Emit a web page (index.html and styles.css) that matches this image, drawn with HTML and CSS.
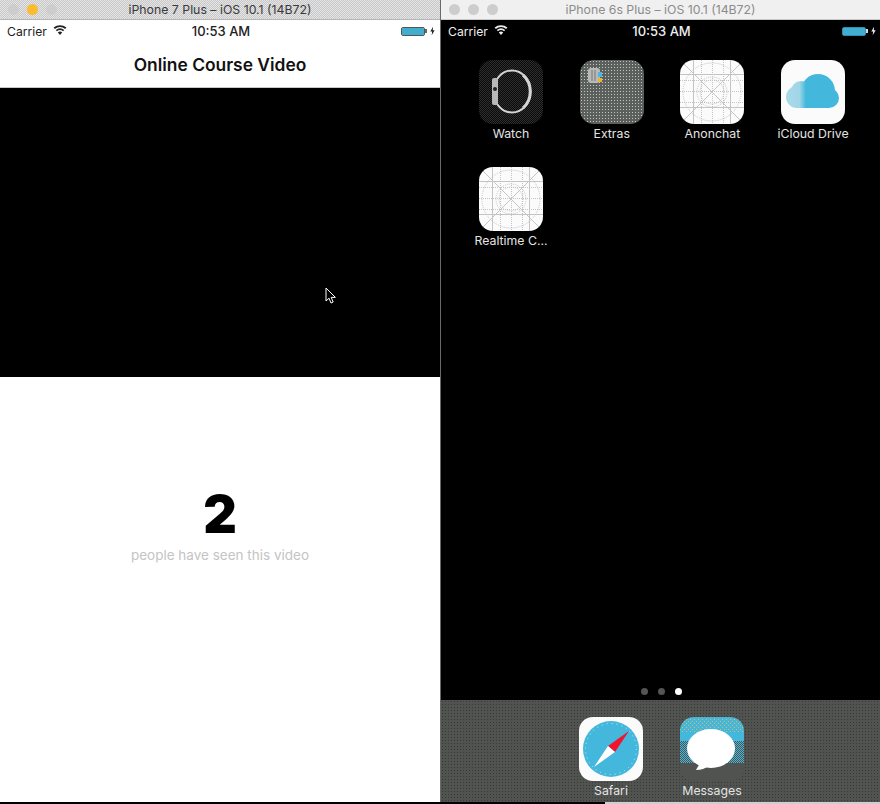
FILE: index.html
```html
<!DOCTYPE html>
<html lang="en">
<head>
<meta charset="utf-8">
<title>Simulators</title>
<link rel="stylesheet" href="styles.css">
</head>
<body>
<svg class="defs" width="0" height="0" aria-hidden="true">
  <defs>
    <linearGradient id="cloud-fill" gradientUnits="userSpaceOnUse" x1="6" y1="0" x2="58" y2="0">
      <stop offset="0" stop-color="#a9d9e8"/>
      <stop offset=".24" stop-color="#a0d6e7"/>
      <stop offset=".36" stop-color="#44b8dc"/>
    </linearGradient>
    <pattern id="dither-blue" width="2" height="2" patternUnits="userSpaceOnUse">
      <rect width="1" height="1" fill="#44b8dc"/>
      <rect x="1" y="1" width="1" height="1" fill="#44b8dc"/>
    </pattern>
    <pattern id="dither-orange" width="4" height="4" patternUnits="userSpaceOnUse">
      <rect width="1" height="1" fill="#e2b75a"/>
      <rect x="2" y="2" width="1" height="1" fill="#e2b75a"/>
    </pattern>
  </defs>
  <symbol id="template" viewBox="0 0 64 64">
    <g fill="none" stroke="#c4c4c4" stroke-width="1">
      <path d="M0 0L64 64M64 0L0 64M13.5 0V64M50.5 0V64M0 14.5H64M0 47.5H64"/>
      <g stroke-dasharray="1 1">
        <path d="M32.5 0V64M0 31.5H64M21.5 0V64M43.5 0V64M0 20.5H64M0 42.5H64"/>
        <circle cx="32" cy="32" r="29"/>
        <circle cx="32" cy="32" r="15"/>
        <circle cx="32" cy="32" r="12"/>
      </g>
    </g>
  </symbol>
  <symbol id="wifi" viewBox="0 0 14 10">
    <path fill="currentColor" d="M7 10L4.8 7.4A3.4 3.4 0 0 1 9.2 7.4ZM3.9 6.3L2.8 5A6.6 6.6 0 0 1 11.2 5L10.1 6.3A4.9 4.9 0 0 0 3.9 6.3ZM1.9 3.9L.6 2.5A10 10 0 0 1 13.4 2.5L12.1 3.9A8.1 8.1 0 0 0 1.9 3.9Z"/>
  </symbol>
  <symbol id="bolt" viewBox="0 0 6 10">
    <path fill="currentColor" d="M3.6 0L.4 5.6H2.6L2 10L5.6 4.2H3.3Z"/>
  </symbol>
</svg>

<div class="desktop">
  <div class="windows">
    <section class="window window-left">
      <header class="titlebar">
        <div class="lights"><span class="light light-off"></span><span class="light light-on"></span><span class="light light-off"></span></div>
        <span class="title">iPhone 7 Plus – iOS 10.1 (14B72)</span>
      </header>
      <div class="statusbar">
        <div class="status-left"><span>Carrier</span><svg class="wifi"><use href="#wifi"/></svg></div>
        <span class="clock">10:53 AM</span>
        <div class="status-right"><span class="battery"><span class="battery-fill"></span></span><span class="battery-tip"></span><svg class="bolt"><use href="#bolt"/></svg></div>
      </div>
      <nav class="navbar">Online Course Video</nav>
      <div class="video"></div>
      <div class="stats">
        <div class="count">2</div>
        <div class="caption">people have seen this video</div>
      </div>
      <svg class="cursor" width="12" height="18" viewBox="0 0 12 18"><path d="M1 1V14L4 11.2L6 16L8.2 15L6.2 10.4H10.4Z" fill="#000" stroke="#fff" stroke-width="1"/></svg>
    </section>

    <section class="window window-right">
      <header class="titlebar titlebar-inactive">
        <div class="lights"><span class="light light-off"></span><span class="light light-off"></span><span class="light light-off"></span></div>
        <span class="title">iPhone 6s Plus – iOS 10.1 (14B72)</span>
      </header>
      <div class="statusbar statusbar-dark">
        <div class="status-left"><span>Carrier</span><svg class="wifi"><use href="#wifi"/></svg></div>
        <span class="clock">10:53 AM</span>
        <div class="status-right"><span class="battery"><span class="battery-fill"></span></span><span class="battery-tip"></span><svg class="bolt"><use href="#bolt"/></svg></div>
      </div>
      <div class="home">
        <div class="app">
          <div class="icon icon-watch">
            <svg width="64" height="64" viewBox="0 0 64 64"><ellipse cx="33" cy="31.5" rx="18.5" ry="21" fill="none" stroke="#d4d4d4" stroke-width="2"/><path d="M44 15A19 21 0 0 1 44 48" fill="none" stroke="#d4d4d4" stroke-width="3"/><rect x="13" y="18" width="6" height="27" rx="2" fill="#b8b8b8"/><circle cx="16" cy="29" r="2" fill="#222"/></svg>
          </div>
          <span class="app-label">Watch</span>
        </div>
        <div class="app">
          <div class="icon icon-extras">
            <svg width="64" height="64" viewBox="0 0 64 64"><rect x="8" y="8" width="12" height="15" rx="3" fill="#b9b9b9"/><rect x="18" y="12" width="4" height="5" fill="#4fb5dc"/><rect x="18" y="18" width="4" height="4" fill="#e9b23b"/><path d="M12 10V21M15 10V21" stroke="#777" stroke-width="1"/></svg>
          </div>
          <span class="app-label">Extras</span>
        </div>
        <div class="app">
          <div class="icon icon-white"><svg width="64" height="64"><use href="#template"/></svg></div>
          <span class="app-label">Anonchat</span>
        </div>
        <div class="app">
          <div class="icon icon-white">
            <svg width="64" height="64" viewBox="0 0 64 64"><g fill="url(#cloud-fill)"><circle cx="16" cy="37" r="11"/><circle cx="20" cy="31" r="10"/><circle cx="37" cy="31" r="17"/><circle cx="48" cy="38" r="10"/><rect x="16" y="36" width="32" height="12"/></g></svg>
          </div>
          <span class="app-label">iCloud Drive</span>
        </div>
        <div class="app">
          <div class="icon icon-white"><svg width="64" height="64"><use href="#template"/></svg></div>
          <span class="app-label">Realtime C...</span>
        </div>
      </div>
      <div class="dots"><span class="dot"></span><span class="dot"></span><span class="dot dot-on"></span></div>
      <footer class="dock">
        <div class="app">
          <div class="icon icon-white">
            <svg width="64" height="64" viewBox="0 0 64 64"><circle cx="32" cy="32" r="28" fill="#44b8dc"/><circle cx="32" cy="32" r="25.5" fill="none" stroke="#c3e8f3" stroke-width="1" stroke-dasharray="1 4"/><path d="M50 14L29 29L36 35Z" fill="#f0142f"/><path d="M15 50L29 29L36 35Z" fill="#fff"/></svg>
          </div>
          <span class="app-label">Safari</span>
        </div>
        <div class="app">
          <div class="icon icon-messages">
            <svg width="64" height="64" viewBox="0 0 64 64"><rect width="64" height="24" fill="#44b8dc"/><rect y="2" width="64" height="14" fill="url(#dither-orange)"/><rect y="24" width="64" height="22" fill="url(#dither-blue)"/><ellipse cx="31" cy="31.5" rx="24" ry="19.5" fill="#fff"/><path d="M20 46L16 53Q24 53 28 49Z" fill="#fff"/></svg>
          </div>
          <span class="app-label">Messages</span>
        </div>
      </footer>
    </section>
  </div>
  <div class="edge"><span class="edge-dark"></span><span class="edge-light"></span></div>
</div>
</body>
</html>
```
FILE: styles.css
```css
* { box-sizing: border-box; }

html, body {
  margin: 0;
  height: 100%;
  background: #000;
  overflow: hidden;
}

body {
  font-family: Inter, "Liberation Sans", sans-serif;
}

.defs { position: absolute; }

.desktop {
  display: flex;
  flex-direction: column;
  width: 880px;
  height: 804px;
}

.windows {
  flex: 1;
  display: flex;
  min-height: 0;
}

.edge {
  flex: none;
  display: flex;
  height: 2px;
}

.edge-dark {
  width: 605px;
  background: #000;
}

.edge-light {
  flex: 1;
  background: #cfcfcf;
}

.window {
  position: relative;
  display: flex;
  flex-direction: column;
}

.window-left {
  width: 441px;
  background: #fff;
  border-right: 1px solid #6a6a6a;
}

.window-right {
  width: 439px;
  background: #000;
}

.titlebar {
  position: relative;
  flex: none;
  display: flex;
  align-items: center;
  justify-content: center;
  height: 20px;
  background-color: #d6d6d6;
  background-image: repeating-conic-gradient(#c6c6c6 0 25%, #e6e6e6 0 50%);
  background-size: 2px 2px;
  border-bottom: 1px solid #b5b5b5;
}

.titlebar-inactive {
  background-color: #f0f0f0;
  background-image: none;
  border-bottom-color: #c9c9c9;
}

.title {
  font-size: 12.3px;
  color: #3a3a3a;
}

.titlebar-inactive .title { color: #8c8c8c; }

.lights {
  position: absolute;
  left: 8px;
  top: 4px;
  display: flex;
  gap: 8px;
}

.light {
  width: 11px;
  height: 11px;
  border-radius: 50%;
}

.light-off { background: #cdcdcd; }
.light-on { background: #fdbc30; }

.statusbar {
  flex: none;
  display: flex;
  align-items: center;
  justify-content: space-between;
  position: relative;
  height: 22px;
  padding: 0 5px 0 7px;
  font-size: 12.2px;
  color: #222;
  background: #fff;
}

.statusbar-dark {
  padding-right: 4px;
  color: #eee;
  background: #000;
}

.status-left {
  display: flex;
  align-items: center;
  gap: 6px;
}

.wifi {
  width: 14px;
  height: 10px;
  margin-bottom: 3px;
}

.clock {
  position: absolute;
  left: 2px;
  right: 0;
  text-align: center;
  font-weight: 500;
  font-size: 13px;
}

.status-right {
  display: flex;
  align-items: center;
}

.battery {
  display: block;
  width: 24px;
  height: 9px;
  border: 1px solid #555;
  border-radius: 2px;
}

.statusbar-dark .battery { border-color: #2f8fae; }

.battery-fill {
  display: block;
  height: 100%;
  background: #41aecf;
}

.battery-tip {
  width: 2px;
  height: 4px;
  background: #666;
  margin-right: 3px;
}

.statusbar-dark .battery-tip { background: #ddd; }

.bolt {
  width: 5px;
  height: 10px;
}

.navbar {
  flex: none;
  display: flex;
  align-items: center;
  justify-content: center;
  height: 46px;
  padding-bottom: 1px;
  font-size: 17.4px;
  font-weight: 600;
  color: #111;
  border-bottom: 1px solid #c8c8c8;
}

.video {
  flex: none;
  height: 289px;
  background: #000;
}

.stats {
  flex: 1;
  display: flex;
  flex-direction: column;
  align-items: center;
  padding-top: 110px;
  background: #fff;
}

.count {
  font-size: 52px;
  line-height: 56px;
  font-weight: 900;
  color: #000;
}

.caption {
  margin-top: 4px;
  font-size: 13.5px;
  color: #c4c4c4;
}

.cursor {
  position: absolute;
  left: 325px;
  top: 287px;
}

.home {
  flex: 1;
  display: grid;
  grid-template-columns: repeat(4, 64px);
  grid-auto-rows: 64px;
  column-gap: 36.7px;
  row-gap: 43px;
  align-content: start;
  padding: 18px 0 0 38px;
}

.app {
  display: flex;
  flex-direction: column;
  align-items: center;
  width: 64px;
}

.icon {
  flex: none;
  width: 64px;
  height: 64px;
  border-radius: 14px;
  overflow: hidden;
}

.icon svg { display: block; }

.icon-white { background: #fbfbfb; }

.icon-watch {
  background-color: #181818;
  background-image: repeating-conic-gradient(#2e2e2e 0 25%, #0a0a0a 0 50%);
  background-size: 2px 2px;
}

.icon-extras {
  background-color: #5c605d;
  background-image: radial-gradient(#c4c6c4 .6px, transparent .9px);
  background-size: 3px 3px;
}

.icon-messages {
  background: #50534f;
}

.app-label {
  margin-top: 2px;
  font-size: 12.3px;
  line-height: 15px;
  color: #e4e4e4;
  white-space: nowrap;
}

.dots {
  flex: none;
  display: flex;
  justify-content: center;
  gap: 10px;
  height: 12px;
  padding-left: 1px;
}

.dot {
  width: 7px;
  height: 7px;
  border-radius: 50%;
  background: #555;
}

.dot-on { background: #fff; }

.dock {
  flex: none;
  display: flex;
  justify-content: center;
  gap: 37px;
  height: 102px;
  padding-top: 17px;
  padding-left: 2px;
  background-color: #50534f;
  background-image: radial-gradient(#363936 .6px, transparent .8px);
  background-size: 3px 3px;
}
```
